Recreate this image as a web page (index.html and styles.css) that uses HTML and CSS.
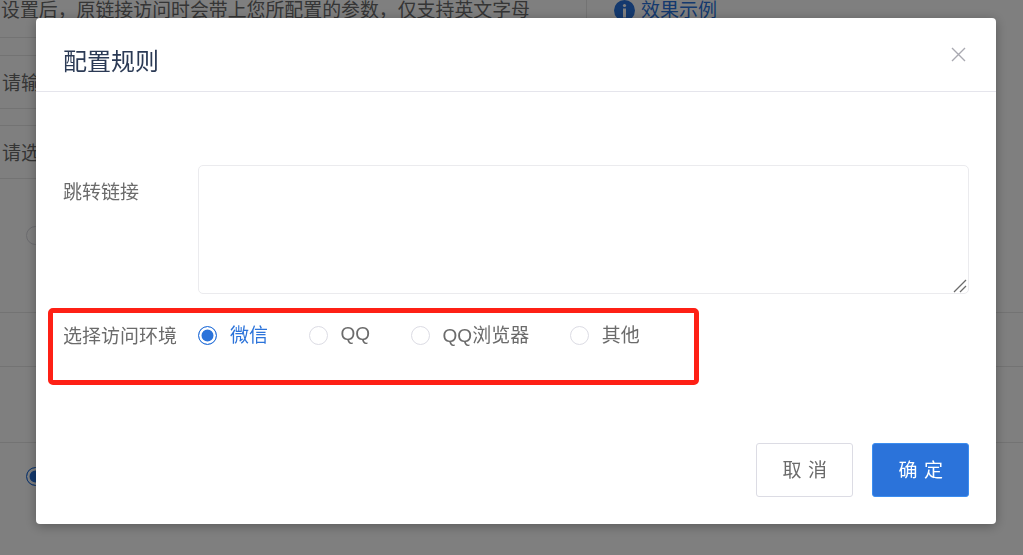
FILE: index.html
```html
<!DOCTYPE html>
<html>
<head>
    <title>配置规则</title>
    <link rel="stylesheet" href="styles.css">
</head>
<body>
    <!-- page behind the dialog -->
    <div class="page">
        <div class="tip-row">
            <div class="tip-text">设置后，原链接访问时会带上您所配置的参数，仅支持英文字母</div>
            <div class="tip-link">
                <svg class="info-icon" width="21" height="21" viewBox="0 0 21 21">
                    <circle cx="10.5" cy="10.5" r="10.5" fill="#2873dc"/>
                    <circle cx="10.5" cy="5.5" r="1.6" fill="#fff"/>
                    <rect x="9" y="8.5" width="3" height="9" fill="#fff"/>
                </svg>
                <span>效果示例</span>
            </div>
        </div>
        <div class="spacer-field"></div>
        <div class="input-field">请输入跳转链接</div>
        <div class="spacer-field spacer-short"></div>
        <div class="input-field">请选择访问环境</div>
        <div class="block block-first"><span class="bg-radio"></span></div>
        <div class="block block-mid"></div>
        <div class="block block-short"></div>
        <div class="block-last"><span class="bg-radio bg-radio-on"></span></div>
    </div>

    <div class="mask"></div>

    <div class="dialog">
        <div class="dialog-header">
            <span class="dialog-title">配置规则</span>
            <svg class="close-icon" width="15" height="15" viewBox="0 0 15 15">
                <path d="M1 1L14 14M14 1L1 14" stroke="#a9a9b1" stroke-width="1.4" fill="none"/>
            </svg>
        </div>
        <div class="dialog-body">
            <div class="form-row">
                <label class="form-label label-top">跳转链接</label>
                <div class="input-wrap">
                    <textarea class="link-input"></textarea>
                    <svg class="resize-handle" width="14" height="14" viewBox="0 0 14 14">
                        <path d="M1 13L13 1M7 13L13 7" stroke="#6b6b6b" stroke-width="1.3" fill="none"/>
                    </svg>
                </div>
            </div>
            <div class="form-row radio-row">
                <label class="form-label label-radio">选择访问环境</label>
                <div class="radio-group">
                    <span class="radio-item active"><span class="radio"></span><span class="radio-text">微信</span></span>
                    <span class="radio-item"><span class="radio"></span><span class="radio-text">QQ</span></span>
                    <span class="radio-item"><span class="radio"></span><span class="radio-text">QQ浏览器</span></span>
                    <span class="radio-item"><span class="radio"></span><span class="radio-text">其他</span></span>
                </div>
            </div>
        </div>
        <div class="dialog-footer">
            <button type="button" class="button">取 消</button>
            <button type="button" class="button button-primary">确 定</button>
        </div>
    </div>

    <!-- red annotation box -->
    <div class="mark-box"></div>
</body>
</html>
```

FILE: styles.css
```css
* {
    box-sizing: border-box;
}

body {
    margin: 0;
    height: 555px;
    overflow: hidden;
    background-color: #fff;
    color: #6b6b6b;
    font-family: "Liberation Sans", "Noto Sans CJK SC", sans-serif;
    font-size: 19px;
}

/* page behind the dialog */
.page {
    height: 555px;
    overflow: hidden;
}

.tip-row {
    display: flex;
    height: 38px;
}

.tip-text {
    width: 586px;
    height: 38px;
    padding: 1px 0 0 1px;
    font-size: 18.9px;
    line-height: 19px;
    border-bottom: 1px solid #e6e6e6;
    white-space: nowrap;
}

.tip-link {
    display: flex;
    align-items: flex-start;
    gap: 6px;
    height: 20px;
    padding-left: 27px;
    border-left: 1px solid #e6e6e6;
    line-height: 19px;
    color: #2873dc;
}

.tip-link span {
    padding-top: 1px;
}

.spacer-field {
    width: 586px;
    height: 18px;
    border-bottom: 1px solid #e6e6e6;
}

.spacer-short {
    height: 17px;
}

.input-field {
    width: 586px;
    height: 53px;
    padding-left: 2px;
    line-height: 55px;
    border-bottom: 1px solid #e6e6e6;
}

.block {
    border-bottom: 1px solid #e6e6e6;
}

.block-first {
    height: 134px;
    padding: 47px 0 0 26px;
}

.block-mid {
    height: 54px;
}

.block-short {
    height: 76px;
}

.block-last {
    padding: 24px 0 0 26px;
}

.bg-radio {
    display: block;
    width: 19px;
    height: 19px;
    border: 1px solid #d9d9e0;
    border-radius: 50%;
    background-color: #fff;
}

.bg-radio-on {
    border-color: #2873dc;
    background-color: #2873dc;
    box-shadow: inset 0 0 0 2.5px #fff;
}

.mask {
    position: fixed;
    top: 0;
    left: 0;
    right: 0;
    bottom: 0;
    background-color: rgba(0, 0, 0, 0.5);
}

/* dialog */
.dialog {
    position: fixed;
    top: 18px;
    left: 36px;
    width: 960px;
    height: 506px;
    display: flex;
    flex-direction: column;
    background-color: #fff;
    border-radius: 4px;
    box-shadow: 0 2px 12px rgba(0, 0, 0, 0.3);
}

.dialog-header {
    display: flex;
    justify-content: space-between;
    align-items: center;
    height: 74px;
    padding: 0 30px 0 27px;
    border-bottom: 1px solid #e5e5ec;
}

.dialog-title {
    padding-top: 9px;
    font-size: 24px;
    color: #2b3a55;
}

.dialog-body {
    padding: 73px 27px 0;
}

.form-row {
    display: flex;
}

.form-label {
    flex: none;
    width: 135px;
    line-height: 26px;
}

.label-top {
    padding-top: 15px;
}

.label-radio {
    padding-top: 2px;
}

.input-wrap {
    position: relative;
    flex: 1;
}

.link-input {
    display: block;
    width: 100%;
    height: 129px;
    border: 1px solid #ebebee;
    border-radius: 5px;
    outline: none;
    resize: none;
}

.resize-handle {
    position: absolute;
    right: 2px;
    bottom: 1px;
}

.radio-row {
    margin-top: 28px;
}

.radio-group {
    display: flex;
    gap: 40.5px;
}

.radio-item {
    display: flex;
    align-items: center;
    gap: 13px;
    height: 26px;
    white-space: nowrap;
}

.radio-text {
    margin-bottom: 3px;
}

.radio {
    flex: none;
    width: 19px;
    height: 19px;
    border: 1px solid #dcdce4;
    border-radius: 50%;
    background-color: #fff;
}

.radio-item.active {
    color: #2b73da;
}

.radio-item.active .radio {
    border-color: #2b73da;
    background-color: #2b73da;
    box-shadow: inset 0 0 0 2.5px #fff;
}

.dialog-footer {
    display: flex;
    justify-content: flex-end;
    gap: 19px;
    margin-top: auto;
    padding: 0 27px 27px;
}

.button {
    width: 97px;
    height: 54px;
    padding: 0 0 3px 1px;
    background-color: #fff;
    border: 1px solid #dcdce4;
    border-radius: 3px;
    color: #6b6b6b;
    font-family: inherit;
    font-size: 19px;
    letter-spacing: 0.5px;
}

.button-primary {
    background-color: #2b73da;
    border-color: #3b8df0;
    color: #fff;
}

.mark-box {
    position: fixed;
    top: 308px;
    left: 48px;
    width: 651px;
    height: 77px;
    border: 5px solid #fe2015;
    border-radius: 5px;
}
```
